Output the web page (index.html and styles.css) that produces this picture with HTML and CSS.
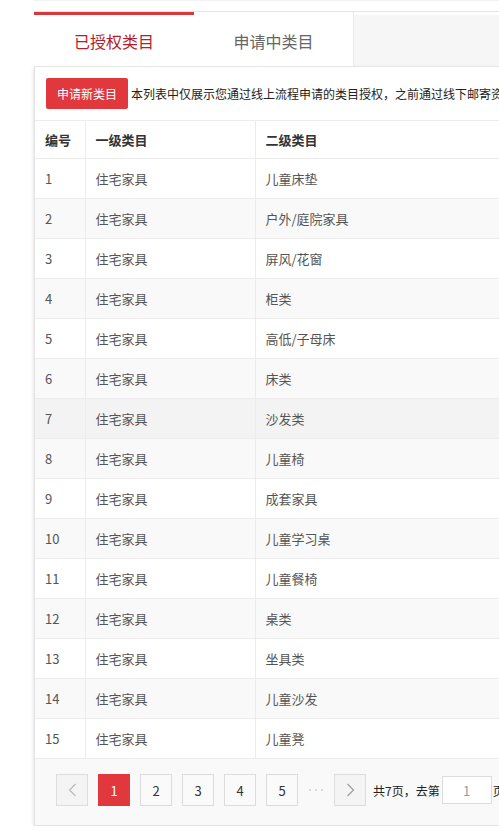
FILE: index.html
```html
<!DOCTYPE html>
<html lang="zh-CN">
<head>
<meta charset="utf-8">
<title>类目管理</title>
<link rel="stylesheet" href="styles.css">
</head>
<body>
<div class="page">
  <div class="tabs">
    <div class="tab active">已授权类目</div>
    <div class="tab">申请中类目</div>
    <div class="tab-rest"></div>
  </div>
  <div class="card">
    <div class="toolbar">
      <button class="btn-apply">申请新类目</button>
      <span class="desc">本列表中仅展示您通过线上流程申请的类目授权，之前通过线下邮寄资质申请的类目授权不在此展示。</span>
    </div>
    <table class="grid">
      <colgroup>
        <col class="c-no">
        <col class="c-lv1">
        <col class="c-lv2">
      </colgroup>
      <thead>
        <tr><th>编号</th><th>一级类目</th><th>二级类目</th></tr>
      </thead>
      <tbody>
        <tr><td>1</td><td>住宅家具</td><td>儿童床垫</td></tr>
        <tr><td>2</td><td>住宅家具</td><td>户外/庭院家具</td></tr>
        <tr><td>3</td><td>住宅家具</td><td>屏风/花窗</td></tr>
        <tr><td>4</td><td>住宅家具</td><td>柜类</td></tr>
        <tr><td>5</td><td>住宅家具</td><td>高低/子母床</td></tr>
        <tr><td>6</td><td>住宅家具</td><td>床类</td></tr>
        <tr class="hover"><td>7</td><td>住宅家具</td><td>沙发类</td></tr>
        <tr><td>8</td><td>住宅家具</td><td>儿童椅</td></tr>
        <tr><td>9</td><td>住宅家具</td><td>成套家具</td></tr>
        <tr><td>10</td><td>住宅家具</td><td>儿童学习桌</td></tr>
        <tr><td>11</td><td>住宅家具</td><td>儿童餐椅</td></tr>
        <tr><td>12</td><td>住宅家具</td><td>桌类</td></tr>
        <tr><td>13</td><td>住宅家具</td><td>坐具类</td></tr>
        <tr><td>14</td><td>住宅家具</td><td>儿童沙发</td></tr>
        <tr><td>15</td><td>住宅家具</td><td>儿童凳</td></tr>
      </tbody>
    </table>
    <div class="pager">
      <span class="pg arrow"><svg width="9" height="14" viewBox="0 0 9 14"><path d="M7.5 1 L1.5 7 L7.5 13" fill="none" stroke="#b8b8b8" stroke-width="1.1"/></svg></span>
      <span class="pg current">1</span>
      <span class="pg">2</span>
      <span class="pg">3</span>
      <span class="pg">4</span>
      <span class="pg">5</span>
      <span class="dots"><svg width="16" height="4" viewBox="0 0 16 4"><circle cx="2" cy="2" r="0.9" fill="#c8c8c8"/><circle cx="8" cy="2" r="0.9" fill="#c8c8c8"/><circle cx="14" cy="2" r="0.9" fill="#c8c8c8"/></svg></span>
      <span class="pg arrow"><svg width="9" height="14" viewBox="0 0 9 14"><path d="M1.5 1 L7.5 7 L1.5 13" fill="none" stroke="#999" stroke-width="1.1"/></svg></span>
      <span class="total">共7页，去第</span>
      <span class="goto">1</span>
      <span class="unit">页</span>
    </div>
  </div>
</div>
</body>
</html>
```

FILE: styles.css
```css
html, body {
  margin: 0;
  padding: 0;
  overflow: hidden;
  background: #fff;
}

body {
  font-family: "Noto Sans CJK SC", "Microsoft YaHei", "Noto Sans", sans-serif;
  color: #333;
}

.page {
  width: 900px;
  margin-left: 34px;
  padding-top: 10px;
  border-top: 1px solid #f2f2f2;
}

/* tabs */
.tabs {
  display: flex;
  height: 55px;
  border-top: 1px solid #e6e6e6;
  box-sizing: border-box;
}

.tab {
  width: 160px;
  flex: none;
  display: flex;
  align-items: center;
  justify-content: center;
  font-size: 16px;
  color: #666;
  background: #fff;
  border-right: 1px solid #ececec;
  padding-top: 3px;
  box-sizing: border-box;
}

.tab.active {
  border-top: 3px solid #d8373c;
  padding-top: 0;
  color: #b3202a;
  border-right: none;
}

.tab-rest {
  flex: 1;
  margin-top: 3px;
  background: #f6f6f6;
}

/* card */
.card {
  background: #fff;
  border: 1px solid #e4e4e4;
  border-right: none;
  box-shadow: 0 1px 4px rgba(0, 0, 0, 0.16);
}

.toolbar {
  display: flex;
  align-items: center;
  gap: 3px;
  height: 53px;
  padding-left: 11px;
}

.btn-apply {
  width: 82px;
  height: 31px;
  border: none;
  border-radius: 2px;
  background: #e0383d;
  color: #fff;
  font-family: inherit;
  font-size: 12px;
  padding: 0;
  flex: none;
}

.desc {
  font-size: 12px;
  color: #222;
  white-space: nowrap;
}

/* table */
.grid {
  width: 100%;
  border-collapse: collapse;
  table-layout: fixed;
  font-size: 13px;
}

.c-no { width: 50px; }
.c-lv1 { width: 170px; }

.grid th,
.grid td {
  text-align: left;
  padding: 0 0 0 10px;
  border-right: 1px solid #ececec;
  border-bottom: 1px solid #ececec;
  white-space: nowrap;
}

.grid th {
  height: 37px;
  border-top: 1px solid #ececec;
  color: #333;
  font-weight: bold;
}

.grid td {
  height: 39px;
  color: #555;
}

.grid tbody tr:nth-child(even) td {
  background: #f9f9f9;
}

.grid tbody tr.hover td {
  background: #f3f3f3;
}

/* pager */
.pager {
  display: flex;
  align-items: center;
  gap: 10px;
  padding: 15px 21px 19px;
  background: #f9f9f9;
  font-size: 13px;
}

.pg {
  width: 32px;
  height: 32px;
  box-sizing: border-box;
  border: 1px solid #dcdcdc;
  background: #fafafa;
  display: flex;
  align-items: center;
  justify-content: center;
  color: #333;
  flex: none;
}

.pg.arrow {
  background: #f4f4f4;
}

.pg.current {
  background: #e0383d;
  border-color: #e0383d;
  color: #fff;
}

.dots {
  width: 16px;
  height: 4px;
  display: flex;
  flex: none;
}

.total {
  margin-left: -3px;
  font-size: 12px;
  color: #222;
  white-space: nowrap;
}

.goto {
  width: 50px;
  height: 28px;
  box-sizing: border-box;
  border: 1px solid #dcdcdc;
  background: #fff;
  color: #999;
  display: flex;
  align-items: center;
  justify-content: center;
  margin-left: -8px;
  flex: none;
}

.unit {
  margin-left: -9px;
  font-size: 12px;
  color: #222;
}
```
